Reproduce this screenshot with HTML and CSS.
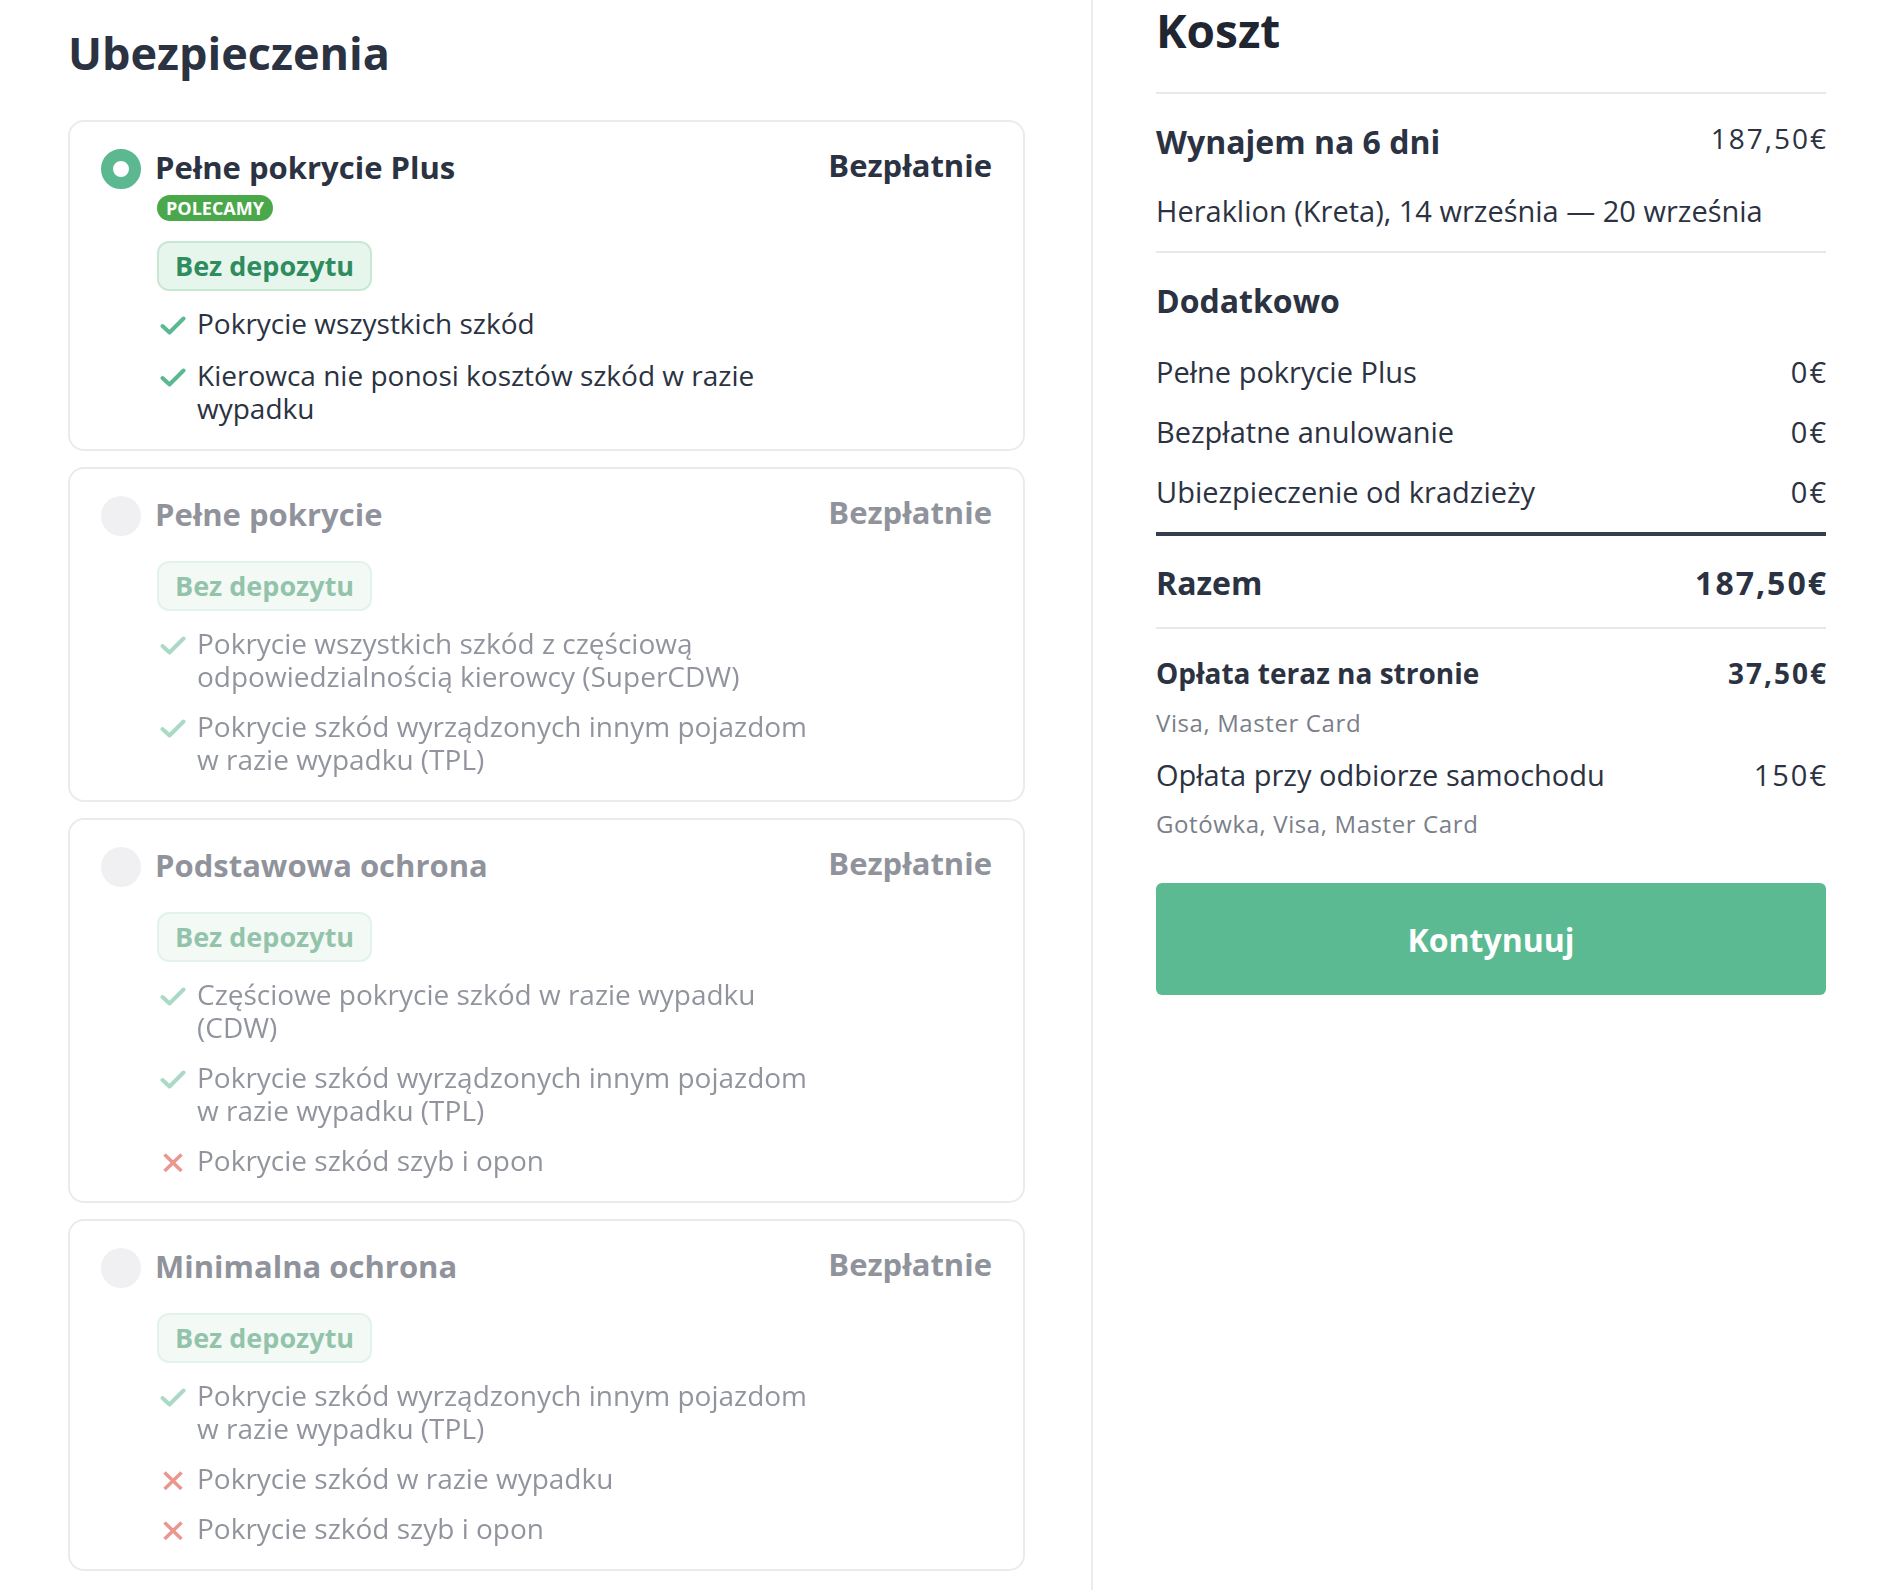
FILE: index.html
```html
<!DOCTYPE html>
<html lang="pl">
<head>
  <meta charset="UTF-8">
  <title>Ubezpieczenia • Koszt</title>
  <link rel="stylesheet" href="styles.css">
</head>
<body>

  <div class="page">

    <div class="insurance">
      <h1>Ubezpieczenia</h1>

      <div class="plan selected">
        <div class="plan-head">
          <span class="radio"></span>
          <div class="plan-name">
            <h3>Pełne pokrycie Plus</h3>
            <span class="badge">POLECAMY</span>
          </div>
          <span class="plan-price">Bezpłatnie</span>
        </div>
        <div class="plan-body">
          <span class="deposit">Bez depozytu</span>
          <ul class="features">
            <li><span class="icon"><svg width="26" height="19" viewBox="0 0 26 19"><path class="check" d="M2.5 10 L9.5 16.5 L23.5 2.5"/></svg></span><span>Pokrycie wszystkich szkód</span></li>
            <li><span class="icon"><svg width="26" height="19" viewBox="0 0 26 19"><path class="check" d="M2.5 10 L9.5 16.5 L23.5 2.5"/></svg></span><span>Kierowca nie ponosi kosztów szkód w razie wypadku</span></li>
          </ul>
        </div>
      </div>

      <div class="plan">
        <div class="plan-head">
          <span class="radio"></span>
          <div class="plan-name">
            <h3>Pełne pokrycie</h3>
          </div>
          <span class="plan-price">Bezpłatnie</span>
        </div>
        <div class="plan-body">
          <span class="deposit">Bez depozytu</span>
          <ul class="features">
            <li><span class="icon"><svg width="26" height="19" viewBox="0 0 26 19"><path class="check" d="M2.5 10 L9.5 16.5 L23.5 2.5"/></svg></span><span>Pokrycie wszystkich szkód z częściową odpowiedzialnością kierowcy (SuperCDW)</span></li>
            <li><span class="icon"><svg width="26" height="19" viewBox="0 0 26 19"><path class="check" d="M2.5 10 L9.5 16.5 L23.5 2.5"/></svg></span><span>Pokrycie szkód wyrządzonych innym pojazdom w razie wypadku (TPL)</span></li>
          </ul>
        </div>
      </div>

      <div class="plan">
        <div class="plan-head">
          <span class="radio"></span>
          <div class="plan-name">
            <h3>Podstawowa ochrona</h3>
          </div>
          <span class="plan-price">Bezpłatnie</span>
        </div>
        <div class="plan-body">
          <span class="deposit">Bez depozytu</span>
          <ul class="features">
            <li><span class="icon"><svg width="26" height="19" viewBox="0 0 26 19"><path class="check" d="M2.5 10 L9.5 16.5 L23.5 2.5"/></svg></span><span>Częściowe pokrycie szkód w razie wypadku (CDW)</span></li>
            <li><span class="icon"><svg width="26" height="19" viewBox="0 0 26 19"><path class="check" d="M2.5 10 L9.5 16.5 L23.5 2.5"/></svg></span><span>Pokrycie szkód wyrządzonych innym pojazdom w razie wypadku (TPL)</span></li>
            <li><span class="icon"><svg width="26" height="19" viewBox="0 0 26 19"><path class="cross" d="M4.5 1.5 L21.5 18 M21.5 1.5 L4.5 18"/></svg></span><span>Pokrycie szkód szyb i opon</span></li>
          </ul>
        </div>
      </div>

      <div class="plan">
        <div class="plan-head">
          <span class="radio"></span>
          <div class="plan-name">
            <h3>Minimalna ochrona</h3>
          </div>
          <span class="plan-price">Bezpłatnie</span>
        </div>
        <div class="plan-body">
          <span class="deposit">Bez depozytu</span>
          <ul class="features">
            <li><span class="icon"><svg width="26" height="19" viewBox="0 0 26 19"><path class="check" d="M2.5 10 L9.5 16.5 L23.5 2.5"/></svg></span><span>Pokrycie szkód wyrządzonych innym pojazdom w razie wypadku (TPL)</span></li>
            <li><span class="icon"><svg width="26" height="19" viewBox="0 0 26 19"><path class="cross" d="M4.5 1.5 L21.5 18 M21.5 1.5 L4.5 18"/></svg></span><span>Pokrycie szkód w razie wypadku</span></li>
            <li><span class="icon"><svg width="26" height="19" viewBox="0 0 26 19"><path class="cross" d="M4.5 1.5 L21.5 18 M21.5 1.5 L4.5 18"/></svg></span><span>Pokrycie szkód szyb i opon</span></li>
          </ul>
        </div>
      </div>
    </div>

    <div class="summary">
      <h2>Koszt</h2>

      <div class="section rental">
        <div class="row">
          <span class="row-title">Wynajem na 6 dni</span>
          <span class="amount rental-price">187,50€</span>
        </div>
        <p class="route">Heraklion (Kreta), 14 września — 20 września</p>
      </div>

      <div class="section extras">
        <div class="row-title">Dodatkowo</div>
        <div class="row line"><span>Pełne pokrycie Plus</span><span class="amount">0€</span></div>
        <div class="row line"><span>Bezpłatne anulowanie</span><span class="amount">0€</span></div>
        <div class="row line"><span>Ubiezpieczenie od kradzieży</span><span class="amount">0€</span></div>
      </div>

      <div class="section total">
        <div class="row">
          <span class="row-title">Razem</span>
          <span class="row-title amount">187,50€</span>
        </div>
      </div>

      <div class="section payments">
        <div class="row line strong"><span>Opłata teraz na stronie</span><span class="amount">37,50€</span></div>
        <p class="methods">Visa, Master Card</p>
        <div class="row line later"><span>Opłata przy odbiorze samochodu</span><span class="amount">150€</span></div>
        <p class="methods">Gotówka, Visa, Master Card</p>
      </div>

      <button class="continue">Kontynuuj</button>
    </div>

  </div>

</body>
</html>
```

FILE: styles.css
```css
body {
  margin: 0;
  font-family: "Open Sans", "Liberation Sans", sans-serif;
  color: #2b3242;
  background: #fff;
}
.page {
  display: flex;
  min-height: 100vh;
}

/* left column */
.insurance {
  width: 957px;
  padding: 25px 66px 0 68px;
  border-right: 2px solid #ececec;
}
h1 {
  margin: 0 0 39px;
  font-size: 45px;
  line-height: 56px;
  font-weight: 700;
}
.plan {
  border: 2px solid #ebebeb;
  border-radius: 16px;
  padding: 25px 31px 24px;
  margin-bottom: 16px;
}
.plan-head {
  display: flex;
  align-items: flex-start;
}
.radio {
  flex: none;
  width: 40px;
  height: 40px;
  margin: 2px 14px 0 0;
  border-radius: 50%;
  background: #e4e4e8;
  box-sizing: border-box;
}
.selected .radio {
  background: #fff;
  border: 12px solid #5bb891;
}
.plan-name {
  flex: 1;
  display: flex;
  flex-direction: column;
  align-items: flex-start;
}
h3 {
  margin: 0;
  font-size: 31px;
  line-height: 40px;
  font-weight: 700;
}
.badge {
  margin: 8px 0 0 2px;
  height: 26px;
  line-height: 26px;
  padding: 0 9px;
  border-radius: 13px;
  background: #4aa84a;
  color: #fff;
  font-size: 18px;
  font-weight: 700;
}
.plan-price {
  font-size: 31px;
  line-height: 36px;
  font-weight: 700;
}
.plan-body {
  padding-left: 56px;
  display: flex;
  flex-direction: column;
  align-items: flex-start;
}
.deposit {
  margin-top: 25px;
  height: 46px;
  line-height: 46px;
  padding: 0 16px;
  border: 2px solid #c8e8d5;
  border-radius: 12px;
  background: #e7f6ed;
  color: #2f8c5e;
  font-size: 27px;
  font-weight: 700;
}
.selected .deposit {
  margin-top: 20px;
}
.features {
  list-style: none;
  margin: 16px 0 0;
  padding: 0;
  max-width: 668px;
}
.features li {
  display: flex;
  font-size: 28px;
  line-height: 33px;
}
.features li + li {
  margin-top: 17px;
}
.selected .features li + li {
  margin-top: 19px;
}
.icon {
  flex: none;
  width: 40px;
}
.icon svg {
  display: block;
  margin: 9px 0 0 3px;
}
.check {
  fill: none;
  stroke: #5bb891;
  stroke-width: 4;
  stroke-linecap: round;
  stroke-linejoin: round;
}
.cross {
  fill: none;
  stroke: #d6362a;
  stroke-width: 3.5;
}
.plan:not(.selected) .plan-head,
.plan:not(.selected) .plan-body {
  opacity: .52;
}

/* right column */
.summary {
  width: 670px;
  padding: 2px 0 0 63px;
}
h2 {
  margin: 0 0 34px;
  font-size: 46px;
  line-height: 56px;
  font-weight: 700;
  color: #1f2631;
}
.section {
  border-top: 2px solid #e8e8e8;
}
.row {
  display: flex;
  justify-content: space-between;
  align-items: flex-start;
}
.row-title {
  font-size: 32px;
  line-height: 40px;
  font-weight: 700;
}
.amount {
  letter-spacing: 2px;
  margin-right: -2px;
}
.rental {
  padding: 28px 0 22px;
}
.rental-price {
  font-size: 28px;
  line-height: 32px;
}
.route {
  margin: 31px 0 0;
  font-size: 29px;
  line-height: 36px;
}
.extras {
  padding: 28px 0 22px;
}
.line {
  font-size: 29px;
  line-height: 36px;
  margin-top: 24px;
}
.extras .row-title + .line {
  margin-top: 33px;
}
.total {
  border-top: 4px solid #373d50;
  padding: 27px 0 24px;
}
.payments {
  padding-top: 26px;
}
.payments .line {
  margin-top: 0;
}
.payments .strong {
  font-size: 28px;
  font-weight: 700;
}
.payments .later {
  margin-top: 18px;
}
.methods {
  margin: 16px 0 0;
  font-size: 24px;
  line-height: 32px;
  letter-spacing: 0.6px;
  color: #7a7f89;
}
.later + .methods {
  margin-top: 15px;
}
.continue {
  display: block;
  width: 100%;
  height: 112px;
  margin-top: 43px;
  border: none;
  border-radius: 6px;
  background: #5bba92;
  color: #fff;
  font-family: inherit;
  font-size: 32px;
  font-weight: 700;
}
```
